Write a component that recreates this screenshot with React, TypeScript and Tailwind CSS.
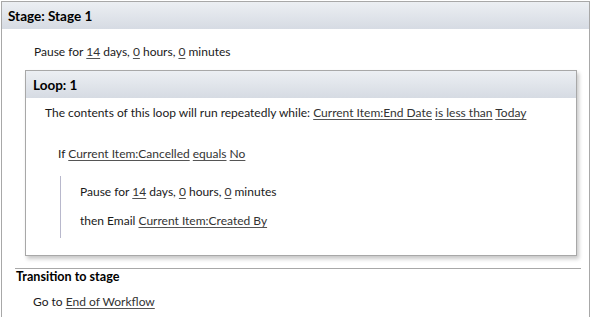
import React from "react";

const L = ({ children }: { children: React.ReactNode }) => (
  <span className="underline decoration-[#555] underline-offset-[2px] text-[#333]">{children}</span>
);

export default function App() {
  return (
    <div
      className="w-[592px] h-[317px] overflow-hidden bg-white text-[12px] leading-[16px] text-[#1a1a1a]"
      style={{ fontFamily: 'Lato, "Open Sans", sans-serif' }}
    >
      <div className="ml-[1px] mt-[1px] w-[589px] h-[330px] border border-[#a8a8a8] bg-white">
        <div className="h-[27px] flex items-center pl-[6px] font-bold text-[13.5px] bg-gradient-to-b from-[#eceff3] to-[#d6dbe3] text-black">
          Stage: Stage 1
        </div>
        <div className="mt-[15px] pl-[32px]">
          Pause for <L>14</L> days, <L>0</L> hours, <L>0</L> minutes
        </div>
        <div className="mt-[10px] ml-[23px] w-[552px] border border-[#a8a8a8] shadow-[2px_3px_4px_rgba(0,0,0,0.22)] pb-[17px]">
          <div className="h-[27px] flex items-center pl-[7px] font-bold text-[13.5px] bg-gradient-to-b from-[#eceff3] to-[#d6dbe3] text-black">
            Loop: 1
          </div>
          <div className="mt-[7px] pl-[19px]">
            The contents of this loop will run repeatedly while: <L>Current Item:End Date</L> <L>is less than</L> <L>Today</L>
          </div>
          <div className="mt-[25px] pl-[32px]">
            If <L>Current Item:Cancelled</L> <L>equals</L> <L>No</L>
          </div>
          <div className="mt-[14px] ml-[34px] border-l border-[#b8b8cc] pl-[19px] pt-[8px] pb-[9px]">
            <div>
              Pause for <L>14</L> days, <L>0</L> hours, <L>0</L> minutes
            </div>
            <div className="mt-[13px]">
              then Email <L>Current Item:Created By</L>
            </div>
          </div>
        </div>
        <div className="mt-[12px] ml-[13px] w-[566px] border-t border-[#a8a8a8]" />
        <div className="pl-[14px] font-bold text-[12.6px] text-black">Transition to stage</div>
        <div className="mt-[9px] pl-[31px]">
          Go to <L>End of Workflow</L>
        </div>
      </div>
    </div>
  );
}
